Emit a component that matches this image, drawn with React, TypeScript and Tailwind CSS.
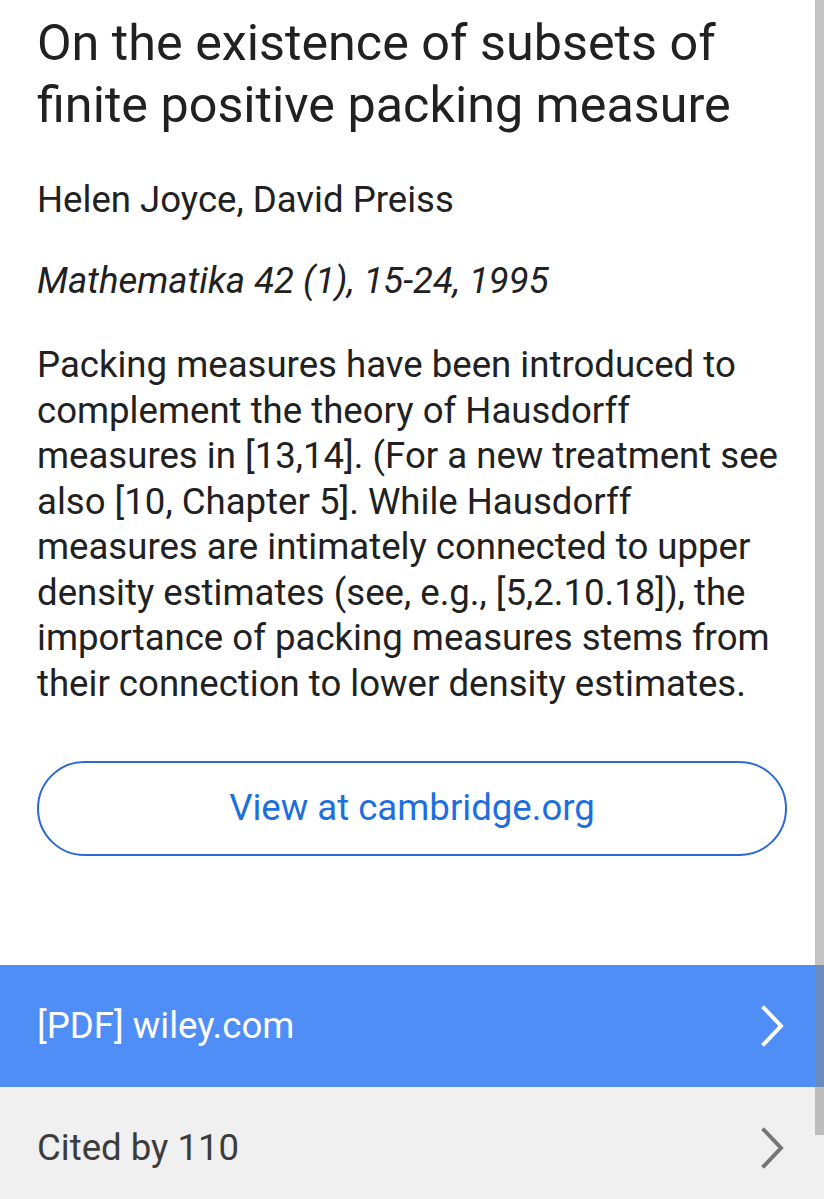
import React from "react";

function Chevron({ color }: { color: string }) {
  return (
    <svg width="26" height="42" viewBox="0 0 26 42" fill="none">
      <path d="M4 3 L21 21 L4 39" stroke={color} strokeWidth="4" strokeLinecap="square" strokeLinejoin="miter" />
    </svg>
  );
}

const abstractLines = [
  "Packing measures have been introduced to",
  "complement the theory of Hausdorff",
  "measures in [13,14]. (For a new treatment see",
  "also [10, Chapter 5]. While Hausdorff",
  "measures are intimately connected to upper",
  "density estimates (see, e.g., [5,2.10.18]), the",
  "importance of packing measures stems from",
  "their connection to lower density estimates.",
];

export default function App() {
  return (
    <div
      className="relative w-[824px] h-[1199px] overflow-hidden bg-white"
      style={{ fontFamily: "Roboto, 'Noto Sans', Arial, sans-serif" }}
    >
      <div className="pl-[37px] pr-[37px] pt-[12px]">
        <h1 className="text-[50.3px] leading-[62px] text-[#212121] font-normal whitespace-nowrap">
          <span className="block">On the existence of subsets of</span>
          <span className="block">finite positive packing measure</span>
        </h1>
        <div className="mt-[41px] text-[36.6px] leading-[45.5px] text-[#212121]">
          Helen Joyce, David Preiss
        </div>
        <div className="mt-[35.5px] text-[36.6px] leading-[45.5px] italic text-[#212121]">
          Mathematika 42 (1), 15-24, 1995
        </div>
        <p className="mt-[38.5px] text-[36.6px] leading-[45.5px] text-[#212121] whitespace-nowrap">
          {abstractLines.map((l) => (
            <span key={l} className="block">
              {l}
            </span>
          ))}
        </p>
        <div className="mt-[55px] h-[95px] w-[750px] rounded-full border-2 border-[#2a6ad6] flex items-center justify-center">
          <span className="text-[36.6px] text-[#1d6fe0]">View at cambridge.org</span>
        </div>
      </div>
      <div className="mt-[109px] h-[122px] bg-[#4f8ef6] flex items-center justify-between pl-[37px] pr-[38px]">
        <span className="text-[36.6px] text-white">[PDF] wiley.com</span>
        <Chevron color="#ffffff" />
      </div>
      <div className="h-[122px] bg-[#f0f0f0] flex items-center justify-between pl-[37px] pr-[38px]">
        <span className="text-[36.6px] text-[#3c3c3c]">Cited by 110</span>
        <Chevron color="#767676" />
      </div>
      <div className="absolute right-0 top-0 w-[9px] h-[1135px] bg-[rgba(136,136,136,0.5)]" />
    </div>
  );
}
